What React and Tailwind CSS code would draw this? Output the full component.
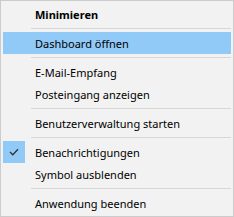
import React from "react";

const Sep = () => (
  <div className="h-[7px] flex items-center pl-[28px]">
    <div className="h-px w-full bg-[#d7d7d7]" />
  </div>
);

const Item = ({ label, bold, highlight, checked }) => (
  <div className={`h-[22px] flex items-center ${highlight ? "bg-[#91c9f7]" : ""}`}>
    <div className="w-[32px] h-full flex items-center">
      {checked && (
        <div className="w-[22px] h-full bg-[#91c9f7] flex items-center justify-center">
          <svg width="10" height="8" viewBox="0 0 10 8">
            <path d="M1 4 L3.8 6.8 L9 1.2" fill="none" stroke="#333" strokeWidth="1.3" />
          </svg>
        </div>
      )}
    </div>
    <span className={`text-[11px] text-black leading-none ${bold ? "font-bold" : ""}`}>{label}</span>
  </div>
);

export default function App() {
  return (
    <div
      className="w-[234px] h-[217px] bg-[#f2f2f2] border border-[#cccccc] p-[2px] flex flex-col"
      style={{ fontFamily: '"Noto Sans", "Segoe UI", sans-serif' }}
    >
      <Item label="Minimieren" bold />
      <Sep />
      <Item label="Dashboard öffnen" highlight />
      <Sep />
      <Item label="E-Mail-Empfang" />
      <Item label="Posteingang anzeigen" />
      <Sep />
      <Item label="Benutzerverwaltung starten" />
      <Sep />
      <Item label="Benachrichtigungen" checked />
      <Item label="Symbol ausblenden" />
      <Sep />
      <Item label="Anwendung beenden" />
    </div>
  );
}
